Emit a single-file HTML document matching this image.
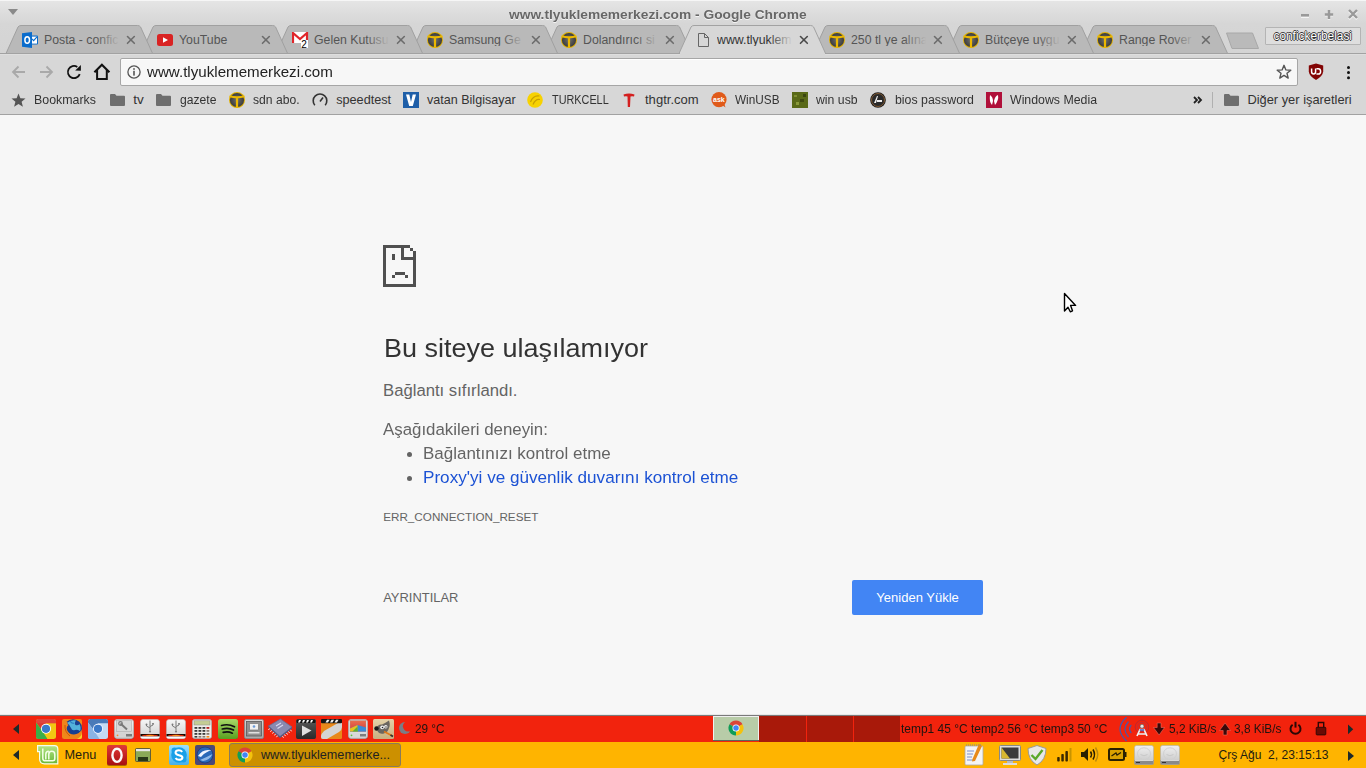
<!DOCTYPE html><html><head><meta charset="utf-8"><style>html,body{margin:0;padding:0;width:1366px;height:768px;overflow:hidden;position:relative;background:#f7f7f7;font-family:"Liberation Sans",sans-serif;}</style></head><body><div style="position:absolute;left:0px;top:0px;width:1366px;height:54px;background:linear-gradient(#e5e5e5 1px,#dcdcdc 14px,#d6d6d6 24px,#d4d4d4 53px);"></div>
<div style="position:absolute;left:0px;top:0px;width:1366px;height:1px;background:#f6f6f6;"></div>
<svg style="position:absolute;left:8px;top:9px" width="10" height="6" viewBox="0 0 10 6"><path d="M0 0 L10 0 L5 6 Z" fill="#8a8a8a"/></svg>
<div style="position:absolute;left:509px;top:8.01px;font-size:13.67px;line-height:13.67px;color:#676767;font-weight:bold;letter-spacing:0px;white-space:nowrap;transform:scaleX(1.0073);transform-origin:0 0;text-shadow:0 1px 0 #f4f4f4;">www.tlyuklememerkezi.com - Google Chrome</div>
<svg style="position:absolute;left:1300px;top:8px" width="60" height="12" viewBox="0 0 60 12"><rect x="1" y="7" width="8" height="3" fill="#f4f4f4"/><rect x="1" y="6" width="8" height="2.6" fill="#999"/><path d="M29 2 L29 11 M24.8 6.5 L33.2 6.5" stroke="#f4f4f4" stroke-width="2.6" transform="translate(0,0.8)"/><path d="M29 2 L29 11 M24.8 6.5 L33.2 6.5" stroke="#999" stroke-width="2.5"/><path d="M49 2.3 L57 10.3 M57 2.3 L49 10.3" stroke="#f4f4f4" stroke-width="2.4" transform="translate(0,0.8)"/><path d="M49 2 L57 10 M57 2 L49 10" stroke="#999" stroke-width="2.4"/></svg>
<svg style="position:absolute;left:0px;top:0px" width="1366" height="56" viewBox="0 0 1366 56"><path d="M1081.0 53.5 L1093 27 Q1094 25.5 1096 25.5 L1212.6 25.5 Q1214.6 25.5 1215.6 27 L1227.6 53.5" fill="#b9b9b9" stroke="#a0a0a0" stroke-width="1"/><path d="M947.0 53.5 L959 27 Q960 25.5 962 25.5 L1078.6 25.5 Q1080.6 25.5 1081.6 27 L1093.6 53.5" fill="#b9b9b9" stroke="#a0a0a0" stroke-width="1"/><path d="M813.0 53.5 L825 27 Q826 25.5 828 25.5 L944.6 25.5 Q946.6 25.5 947.6 27 L959.6 53.5" fill="#b9b9b9" stroke="#a0a0a0" stroke-width="1"/><path d="M545.0 53.5 L557 27 Q558 25.5 560 25.5 L676.6 25.5 Q678.6 25.5 679.6 27 L691.6 53.5" fill="#b9b9b9" stroke="#a0a0a0" stroke-width="1"/><path d="M411.0 53.5 L423 27 Q424 25.5 426 25.5 L542.6 25.5 Q544.6 25.5 545.6 27 L557.6 53.5" fill="#b9b9b9" stroke="#a0a0a0" stroke-width="1"/><path d="M276.0 53.5 L288 27 Q289 25.5 291 25.5 L407.6 25.5 Q409.6 25.5 410.6 27 L422.6 53.5" fill="#b9b9b9" stroke="#a0a0a0" stroke-width="1"/><path d="M141.0 53.5 L153 27 Q154 25.5 156 25.5 L272.6 25.5 Q274.6 25.5 275.6 27 L287.6 53.5" fill="#b9b9b9" stroke="#a0a0a0" stroke-width="1"/><path d="M6.0 53.5 L18 27 Q19 25.5 21 25.5 L137.6 25.5 Q139.6 25.5 140.6 27 L152.6 53.5" fill="#b9b9b9" stroke="#a0a0a0" stroke-width="1"/><path d="M678.57 54.5 L691 27 Q692 25.5 694 25.5 L810.6 25.5 Q812.6 25.5 813.6 27 L826.03 54.5" fill="#d7d7d7" stroke="#a2a2a2" stroke-width="1"/><path d="M1226.5 33 L1252.5 33 L1258.5 48.5 L1232 48.5 Z" fill="#bababa" stroke="#a8a8a8" stroke-width="1" stroke-linejoin="round"/></svg>
<div style="position:absolute;left:0px;top:53px;width:680px;height:1px;background:#a2a2a2;"></div>
<div style="position:absolute;left:825px;top:53px;width:541px;height:1px;background:#a2a2a2;"></div>
<svg style="position:absolute;left:22px;top:32px" width="16" height="16" viewBox="0 0 16 16"><path d="M10 3.5 L15 3.5 Q16 3.5 16 4.5 L16 11.5 Q16 12.5 15 12.5 L10 12.5 Z" fill="#0a6ccc"/><rect x="10" y="4.6" width="5" height="7" fill="#fff"/><path d="M10 6.8 L11.6 8.6 L15 4.8" stroke="#0a6ccc" stroke-width="1.1" fill="none"/><path d="M0 1.3 L10 0 L10 16 L0 14.7 Z" fill="#0a6ccc"/><ellipse cx="5.2" cy="8" rx="2.3" ry="3.3" fill="none" stroke="#fff" stroke-width="1.5"/></svg>
<svg style="position:absolute;left:157px;top:34px" width="16" height="12" viewBox="0 0 16 12"><rect x="0" y="0" width="16" height="12" rx="2.5" fill="#d92323"/><path d="M6 3.2 L11 6 L6 8.8 Z" fill="#fff"/></svg>
<svg style="position:absolute;left:292px;top:32px" width="17" height="17" viewBox="0 0 17 17"><rect x="0" y="0" width="16" height="11" fill="#fff"/><path d="M1 11 L1 1 L8 7 L15 1 L15 11" stroke="#e0252a" stroke-width="2.2" fill="none"/><rect x="9" y="8" width="7" height="8" fill="#fff"/><text x="9.3" y="15.5" font-family="Liberation Sans" font-size="10" fill="#000">2</text></svg>
<svg style="position:absolute;left:427px;top:32px" width="16" height="16" viewBox="0 0 16 16"><defs><radialGradient id="yfg"><stop offset="0" stop-color="#6e6e6e"/><stop offset="1" stop-color="#3c3c3c"/></radialGradient></defs><circle cx="8" cy="8" r="8" fill="#e0b000"/><circle cx="8" cy="8" r="7.1" fill="url(#yfg)"/><path d="M0.5 4.3 Q8 6.3 15.5 4.3 M8 5.3 L8 15.5" stroke="#ecb800" stroke-width="2.2" fill="none"/></svg>
<svg style="position:absolute;left:561px;top:32px" width="16" height="16" viewBox="0 0 16 16"><defs><radialGradient id="yfg"><stop offset="0" stop-color="#6e6e6e"/><stop offset="1" stop-color="#3c3c3c"/></radialGradient></defs><circle cx="8" cy="8" r="8" fill="#e0b000"/><circle cx="8" cy="8" r="7.1" fill="url(#yfg)"/><path d="M0.5 4.3 Q8 6.3 15.5 4.3 M8 5.3 L8 15.5" stroke="#ecb800" stroke-width="2.2" fill="none"/></svg>
<svg style="position:absolute;left:829px;top:32px" width="16" height="16" viewBox="0 0 16 16"><defs><radialGradient id="yfg"><stop offset="0" stop-color="#6e6e6e"/><stop offset="1" stop-color="#3c3c3c"/></radialGradient></defs><circle cx="8" cy="8" r="8" fill="#e0b000"/><circle cx="8" cy="8" r="7.1" fill="url(#yfg)"/><path d="M0.5 4.3 Q8 6.3 15.5 4.3 M8 5.3 L8 15.5" stroke="#ecb800" stroke-width="2.2" fill="none"/></svg>
<svg style="position:absolute;left:963px;top:32px" width="16" height="16" viewBox="0 0 16 16"><defs><radialGradient id="yfg"><stop offset="0" stop-color="#6e6e6e"/><stop offset="1" stop-color="#3c3c3c"/></radialGradient></defs><circle cx="8" cy="8" r="8" fill="#e0b000"/><circle cx="8" cy="8" r="7.1" fill="url(#yfg)"/><path d="M0.5 4.3 Q8 6.3 15.5 4.3 M8 5.3 L8 15.5" stroke="#ecb800" stroke-width="2.2" fill="none"/></svg>
<svg style="position:absolute;left:1097px;top:32px" width="16" height="16" viewBox="0 0 16 16"><defs><radialGradient id="yfg"><stop offset="0" stop-color="#6e6e6e"/><stop offset="1" stop-color="#3c3c3c"/></radialGradient></defs><circle cx="8" cy="8" r="8" fill="#e0b000"/><circle cx="8" cy="8" r="7.1" fill="url(#yfg)"/><path d="M0.5 4.3 Q8 6.3 15.5 4.3 M8 5.3 L8 15.5" stroke="#ecb800" stroke-width="2.2" fill="none"/></svg>
<svg style="position:absolute;left:698px;top:33px" width="11" height="14" viewBox="0 0 11 14"><path d="M0.5 0.5 L6.5 0.5 L10.5 4.5 L10.5 13.5 L0.5 13.5 Z M6.5 0.5 L6.5 4.5 L10.5 4.5" fill="none" stroke="#666" stroke-width="1"/></svg>
<div style="position:absolute;left:44px;top:33.99px;width:77.6px;overflow:hidden;font-size:12.3px;line-height:12.3px;color:#555;white-space:nowrap;">Posta - confic<div style="position:absolute;right:0;top:0;width:26px;height:16px;background:linear-gradient(90deg,rgba(0,0,0,0),#b9b9b9 90%)"></div></div>
<svg style="position:absolute;left:125.6px;top:35px" width="10" height="10" viewBox="0 0 10 10"><path d="M1.5 1.5 L8.3 8.3 M8.3 1.5 L1.5 8.3" stroke="#6c6c6c" stroke-width="1.6" stroke-linecap="round"/></svg>
<div style="position:absolute;left:179px;top:33.99px;width:77.6px;overflow:hidden;font-size:12.3px;line-height:12.3px;color:#555;white-space:nowrap;">YouTube<div style="position:absolute;right:0;top:0;width:26px;height:16px;background:linear-gradient(90deg,rgba(0,0,0,0),#b9b9b9 90%)"></div></div>
<svg style="position:absolute;left:260.6px;top:35px" width="10" height="10" viewBox="0 0 10 10"><path d="M1.5 1.5 L8.3 8.3 M8.3 1.5 L1.5 8.3" stroke="#6c6c6c" stroke-width="1.6" stroke-linecap="round"/></svg>
<div style="position:absolute;left:314px;top:33.99px;width:77.6px;overflow:hidden;font-size:12.3px;line-height:12.3px;color:#555;white-space:nowrap;">Gelen Kutusu<div style="position:absolute;right:0;top:0;width:26px;height:16px;background:linear-gradient(90deg,rgba(0,0,0,0),#b9b9b9 90%)"></div></div>
<svg style="position:absolute;left:395.6px;top:35px" width="10" height="10" viewBox="0 0 10 10"><path d="M1.5 1.5 L8.3 8.3 M8.3 1.5 L1.5 8.3" stroke="#6c6c6c" stroke-width="1.6" stroke-linecap="round"/></svg>
<div style="position:absolute;left:449px;top:33.99px;width:77.6px;overflow:hidden;font-size:12.3px;line-height:12.3px;color:#555;white-space:nowrap;">Samsung Ge<div style="position:absolute;right:0;top:0;width:26px;height:16px;background:linear-gradient(90deg,rgba(0,0,0,0),#b9b9b9 90%)"></div></div>
<svg style="position:absolute;left:530.6px;top:35px" width="10" height="10" viewBox="0 0 10 10"><path d="M1.5 1.5 L8.3 8.3 M8.3 1.5 L1.5 8.3" stroke="#6c6c6c" stroke-width="1.6" stroke-linecap="round"/></svg>
<div style="position:absolute;left:583px;top:33.99px;width:77.6px;overflow:hidden;font-size:12.3px;line-height:12.3px;color:#555;white-space:nowrap;">Dolandırıcı si<div style="position:absolute;right:0;top:0;width:26px;height:16px;background:linear-gradient(90deg,rgba(0,0,0,0),#b9b9b9 90%)"></div></div>
<svg style="position:absolute;left:664.6px;top:35px" width="10" height="10" viewBox="0 0 10 10"><path d="M1.5 1.5 L8.3 8.3 M8.3 1.5 L1.5 8.3" stroke="#6c6c6c" stroke-width="1.6" stroke-linecap="round"/></svg>
<div style="position:absolute;left:717px;top:33.99px;width:77.6px;overflow:hidden;font-size:12.3px;line-height:12.3px;color:#333;white-space:nowrap;">www.tlyuklem<div style="position:absolute;right:0;top:0;width:26px;height:16px;background:linear-gradient(90deg,rgba(0,0,0,0),#d7d7d7 90%)"></div></div>
<svg style="position:absolute;left:798.6px;top:35px" width="10" height="10" viewBox="0 0 10 10"><path d="M1.5 1.5 L8.3 8.3 M8.3 1.5 L1.5 8.3" stroke="#4a4a4a" stroke-width="1.6" stroke-linecap="round"/></svg>
<div style="position:absolute;left:851px;top:33.99px;width:77.6px;overflow:hidden;font-size:12.3px;line-height:12.3px;color:#555;white-space:nowrap;">250 tl ye alına<div style="position:absolute;right:0;top:0;width:26px;height:16px;background:linear-gradient(90deg,rgba(0,0,0,0),#b9b9b9 90%)"></div></div>
<svg style="position:absolute;left:932.6px;top:35px" width="10" height="10" viewBox="0 0 10 10"><path d="M1.5 1.5 L8.3 8.3 M8.3 1.5 L1.5 8.3" stroke="#6c6c6c" stroke-width="1.6" stroke-linecap="round"/></svg>
<div style="position:absolute;left:985px;top:33.99px;width:77.6px;overflow:hidden;font-size:12.3px;line-height:12.3px;color:#555;white-space:nowrap;">Bütçeye uygu<div style="position:absolute;right:0;top:0;width:26px;height:16px;background:linear-gradient(90deg,rgba(0,0,0,0),#b9b9b9 90%)"></div></div>
<svg style="position:absolute;left:1066.6px;top:35px" width="10" height="10" viewBox="0 0 10 10"><path d="M1.5 1.5 L8.3 8.3 M8.3 1.5 L1.5 8.3" stroke="#6c6c6c" stroke-width="1.6" stroke-linecap="round"/></svg>
<div style="position:absolute;left:1119px;top:33.99px;width:77.6px;overflow:hidden;font-size:12.3px;line-height:12.3px;color:#555;white-space:nowrap;">Range Rover<div style="position:absolute;right:0;top:0;width:26px;height:16px;background:linear-gradient(90deg,rgba(0,0,0,0),#b9b9b9 90%)"></div></div>
<svg style="position:absolute;left:1200.6px;top:35px" width="10" height="10" viewBox="0 0 10 10"><path d="M1.5 1.5 L8.3 8.3 M8.3 1.5 L1.5 8.3" stroke="#6c6c6c" stroke-width="1.6" stroke-linecap="round"/></svg>
<div style="position:absolute;left:1265px;top:27px;width:94px;height:16px;border:1px solid #b4b4b4;background:#dedede;border-radius:1px"></div>
<div style="position:absolute;left:1273.5px;top:31.01px;font-size:11.87px;line-height:11.87px;color:#fff;font-weight:normal;letter-spacing:0px;white-space:nowrap;text-shadow:0.8px 0 0 #333,-0.8px 0 0 #333,0 0.8px 0 #333,0 -0.8px 0 #333;">confickerbelasi</div>
<div style="position:absolute;left:0px;top:54px;width:1366px;height:60px;background:#d7d7d7;"></div>
<div style="position:absolute;left:0px;top:54px;width:680px;height:1px;background:#dedede;"></div>
<div style="position:absolute;left:825px;top:54px;width:541px;height:1px;background:#dedede;"></div>
<div style="position:absolute;left:0px;top:114px;width:1366px;height:1px;background:#a2a2a2;"></div>
<svg style="position:absolute;left:11px;top:65px" width="15" height="14" viewBox="0 0 15 14"><path d="M14 7 L2 7 M7.5 1.5 L2 7 L7.5 12.5" stroke="#a9a9a9" stroke-width="1.8" fill="none"/></svg>
<svg style="position:absolute;left:39px;top:65px" width="15" height="14" viewBox="0 0 15 14"><path d="M1 7 L13 7 M7.5 1.5 L13 7 L7.5 12.5" stroke="#a9a9a9" stroke-width="1.8" fill="none"/></svg>
<svg style="position:absolute;left:66px;top:64px" width="16" height="16" viewBox="0 0 16 16"><path d="M13.73 10.09 A6.1 6.1 0 1 1 11.3 2.9" stroke="#111" stroke-width="1.8" fill="none"/><path d="M9.2 6.6 L14.9 1 L14.9 6.7 Z" fill="#111"/></svg>
<svg style="position:absolute;left:93px;top:63px" width="18" height="17" viewBox="0 0 18 17"><path d="M1.4 9.3 L8.9 1.8 L16.4 9.3" stroke="#111" stroke-width="2.1" fill="none" stroke-linejoin="miter"/><path d="M4.1 7 L4.1 15.9 L13.8 15.9 L13.8 7" stroke="#111" stroke-width="2" fill="none"/></svg>
<div style="position:absolute;left:120px;top:58px;width:1176px;height:26px;border:1px solid #a6a6a6;border-radius:2px;background:#f7f7f7;box-shadow:inset 0 1px 0 #fff"></div>
<svg style="position:absolute;left:127px;top:65px" width="14" height="14" viewBox="0 0 14 14"><circle cx="7" cy="7" r="6.1" stroke="#555" stroke-width="1.3" fill="none"/><rect x="6.2" y="3.2" width="1.6" height="1.6" fill="#555"/><rect x="6.2" y="5.8" width="1.6" height="4.8" fill="#555"/></svg>
<div style="position:absolute;left:147px;top:65.00px;font-size:14.84px;line-height:14.84px;color:#222;font-weight:normal;letter-spacing:0px;white-space:nowrap;transform:scaleX(1.0206);transform-origin:0 0;">www.tlyuklememerkezi.com</div>
<svg style="position:absolute;left:1276px;top:64px" width="16" height="16" viewBox="0 0 16 16"><path d="M8 1.3 L9.9 5.9 L14.8 6.2 L11 9.3 L12.2 14.1 L8 11.4 L3.8 14.1 L5 9.3 L1.2 6.2 L6.1 5.9 Z" stroke="#555" stroke-width="1.4" fill="none" stroke-linejoin="round"/></svg>
<svg style="position:absolute;left:1308px;top:63px" width="16" height="18" viewBox="0 0 16 18"><path d="M8 0.6 L15.2 2.6 L15.2 8.5 Q14.6 13.5 8 16.9 Q1.4 13.5 0.8 8.5 L0.8 2.6 Z" fill="#820404"/><path d="M3.6 5.6 L3.6 8.8 Q3.6 11 5.6 11 Q7.6 11 7.6 8.8 L7.6 5.6" stroke="#fff" stroke-width="1.5" fill="none"/><path d="M8.4 5.8 L10.2 5.8 Q12.6 5.8 12.6 8.4 Q12.6 11 10.2 11 L8.4 11" stroke="#fff" stroke-width="1.5" fill="none"/></svg>
<svg style="position:absolute;left:1346px;top:65px" width="5" height="15" viewBox="0 0 5 15"><circle cx="2.5" cy="2.5" r="1.5" fill="#111"/><circle cx="2.5" cy="7.6" r="1.5" fill="#111"/><circle cx="2.5" cy="12.7" r="1.5" fill="#111"/></svg>
<svg style="position:absolute;left:11px;top:93px" width="15" height="14" viewBox="0 0 15 14"><path d="M7.5 0.5 L9.4 5.2 L14.5 5.5 L10.6 8.7 L11.9 13.7 L7.5 10.9 L3.1 13.7 L4.4 8.7 L0.5 5.5 L5.6 5.2 Z" fill="#555"/></svg>
<div style="position:absolute;left:34.4px;top:94.01px;font-size:12.5px;line-height:12.5px;color:#333;font-weight:normal;letter-spacing:0px;white-space:nowrap;transform:scaleX(0.9915);transform-origin:0 0;">Bookmarks</div>
<div style="position:absolute;left:133.3px;top:93.01px;font-size:13.5px;line-height:13.5px;color:#333;font-weight:normal;letter-spacing:0px;white-space:nowrap;">tv</div>
<div style="position:absolute;left:179.6px;top:94.01px;font-size:12.5px;line-height:12.5px;color:#333;font-weight:normal;letter-spacing:0px;white-space:nowrap;transform:scaleX(0.9724);transform-origin:0 0;">gazete</div>
<div style="position:absolute;left:253px;top:94.01px;font-size:12.5px;line-height:12.5px;color:#333;font-weight:normal;letter-spacing:0px;white-space:nowrap;transform:scaleX(0.9695);transform-origin:0 0;">sdn abo.</div>
<div style="position:absolute;left:336.2px;top:94.00px;font-size:12.68px;line-height:12.68px;color:#333;font-weight:normal;letter-spacing:0px;white-space:nowrap;">speedtest</div>
<div style="position:absolute;left:427.1px;top:94.01px;font-size:12.54px;line-height:12.54px;color:#333;font-weight:normal;letter-spacing:0px;white-space:nowrap;">vatan Bilgisayar</div>
<div style="position:absolute;left:551.8px;top:94.01px;font-size:12.5px;line-height:12.5px;color:#333;font-weight:normal;letter-spacing:0px;white-space:nowrap;transform:scaleX(0.8682);transform-origin:0 0;">TURKCELL</div>
<div style="position:absolute;left:645px;top:93.01px;font-size:13.06px;line-height:13.06px;color:#333;font-weight:normal;letter-spacing:0px;white-space:nowrap;">thgtr.com</div>
<div style="position:absolute;left:734.8px;top:94.01px;font-size:12.5px;line-height:12.5px;color:#333;font-weight:normal;letter-spacing:0px;white-space:nowrap;transform:scaleX(0.9421);transform-origin:0 0;">WinUSB</div>
<div style="position:absolute;left:816.2px;top:94.01px;font-size:12.5px;line-height:12.5px;color:#333;font-weight:normal;letter-spacing:0px;white-space:nowrap;transform:scaleX(0.9814);transform-origin:0 0;">win usb</div>
<div style="position:absolute;left:894.8px;top:94.01px;font-size:12.5px;line-height:12.5px;color:#333;font-weight:normal;letter-spacing:0px;white-space:nowrap;transform:scaleX(0.9886);transform-origin:0 0;">bios password</div>
<div style="position:absolute;left:1010px;top:94.01px;font-size:12.5px;line-height:12.5px;color:#333;font-weight:normal;letter-spacing:0px;white-space:nowrap;transform:scaleX(0.9859);transform-origin:0 0;">Windows Media</div>
<div style="position:absolute;left:1247.4px;top:94.00px;font-size:12.87px;line-height:12.87px;color:#333;font-weight:normal;letter-spacing:0px;white-space:nowrap;">Diğer yer işaretleri</div>
<svg style="position:absolute;left:110px;top:94px" width="15" height="12" viewBox="0 0 15 12"><path d="M0 1 Q0 0 1 0 L5 0 L6.5 1.8 L14 1.8 Q15 1.8 15 2.8 L15 11 Q15 12 14 12 L1 12 Q0 12 0 11 Z" fill="#6e6e6e"/></svg>
<svg style="position:absolute;left:156px;top:94px" width="15" height="12" viewBox="0 0 15 12"><path d="M0 1 Q0 0 1 0 L5 0 L6.5 1.8 L14 1.8 Q15 1.8 15 2.8 L15 11 Q15 12 14 12 L1 12 Q0 12 0 11 Z" fill="#6e6e6e"/></svg>
<svg style="position:absolute;left:1224px;top:94px" width="15" height="12" viewBox="0 0 15 12"><path d="M0 1 Q0 0 1 0 L5 0 L6.5 1.8 L14 1.8 Q15 1.8 15 2.8 L15 11 Q15 12 14 12 L1 12 Q0 12 0 11 Z" fill="#6e6e6e"/></svg>
<svg style="position:absolute;left:229px;top:92px" width="16" height="16" viewBox="0 0 16 16"><defs><radialGradient id="yfg"><stop offset="0" stop-color="#6e6e6e"/><stop offset="1" stop-color="#3c3c3c"/></radialGradient></defs><circle cx="8" cy="8" r="8" fill="#e0b000"/><circle cx="8" cy="8" r="7.1" fill="url(#yfg)"/><path d="M0.5 4.3 Q8 6.3 15.5 4.3 M8 5.3 L8 15.5" stroke="#ecb800" stroke-width="2.2" fill="none"/></svg>
<svg style="position:absolute;left:312px;top:92px" width="16" height="16" viewBox="0 0 16 16"><path d="M2.8 13.2 A6.8 6.8 0 1 1 13.2 13.2" stroke="#333" stroke-width="1.6" fill="none"/><path d="M8 9.5 L11 5.5" stroke="#333" stroke-width="1.6"/></svg>
<svg style="position:absolute;left:403px;top:92px" width="16" height="16" viewBox="0 0 16 16"><rect width="16" height="16" fill="#1f5fa8"/><path d="M3 2.5 L6.3 2.5 L8 10 L9.7 2.5 L13 2.5 L9.8 14 L6.2 14 Z" fill="#fff"/></svg>
<svg style="position:absolute;left:527px;top:92px" width="16" height="16" viewBox="0 0 16 16"><circle cx="8" cy="8" r="7.8" fill="#f7d200"/><path d="M3.5 10 Q6 3 12.5 4 M6 12.5 Q8.5 6.5 13 7.5" stroke="#c8a000" stroke-width="1.2" fill="none"/></svg>
<svg style="position:absolute;left:623px;top:92px" width="12" height="16" viewBox="0 0 12 16"><path d="M0.5 2.5 Q6 0.5 11.5 2.5 L11 4.5 Q9 4 7.5 4.5 L7 15 L4.8 15 L4.5 4.5 Q3 4 1 4.5 Z" fill="#d42020"/></svg>
<svg style="position:absolute;left:711px;top:92px" width="16" height="16" viewBox="0 0 16 16"><circle cx="8" cy="7.6" r="7.6" fill="#e05a1a"/><path d="M11 13 L14.5 15.5 L13 11" fill="#e05a1a"/><text x="2" y="10.3" font-family="Liberation Sans" font-size="7" font-weight="bold" fill="#fff">ask</text></svg>
<svg style="position:absolute;left:792px;top:92px" width="16" height="16" viewBox="0 0 16 16"><rect width="16" height="16" fill="#5a6a18"/><rect x="2" y="3" width="3" height="2" fill="#7f8f30"/><rect x="8" y="7" width="4" height="3" fill="#3f4a10"/><rect x="4" y="10" width="3" height="3" fill="#8a9a3a"/><rect x="11" y="2" width="3" height="3" fill="#3a4510"/></svg>
<svg style="position:absolute;left:870px;top:92px" width="16" height="16" viewBox="0 0 16 16"><circle cx="8" cy="8" r="7.8" fill="#1a1a1a"/><circle cx="8" cy="8" r="6.5" fill="#2a2a2a" stroke="#9a6a3a" stroke-width="0.8"/><path d="M4 11 L7 4 L8 4 L6 11 Z M7 8 L12 8 L12 10 L7 10Z" fill="#eee"/></svg>
<svg style="position:absolute;left:986px;top:92px" width="16" height="16" viewBox="0 0 16 16"><rect width="16" height="16" fill="#b0103a"/><path d="M4 3 Q7 5 7 9 L6 13 Q3 10 4 3 Z M8 9 Q9 4 12 3 Q13 8 9 13 Z" fill="#fff"/></svg>
<svg style="position:absolute;left:1193px;top:96px" width="10" height="8" viewBox="0 0 10 8"><path d="M1 1 L4 4 L1 7 M5 1 L8 4 L5 7" stroke="#222" stroke-width="1.8" fill="none"/></svg>
<div style="position:absolute;left:1212px;top:92px;width:1px;height:16px;background:#b0b0b0;"></div>
<div style="position:absolute;left:0px;top:115px;width:1366px;height:600px;background:#f7f7f7;"></div>
<svg style="position:absolute;left:383px;top:245px" width="33" height="42" viewBox="0 0 33 42" shape-rendering="crispEdges" fill="#505050"><rect x="0" y="0" width="27" height="3"/><rect x="27" y="3" width="3" height="3"/><rect x="30" y="6" width="3" height="36"/><rect x="0" y="0" width="3" height="42"/><rect x="0" y="39" width="33" height="3"/><rect x="18" y="3" width="3" height="12"/><rect x="18" y="12" width="12" height="3"/><rect x="9" y="9" width="3" height="6"/><rect x="12" y="27" width="10" height="3"/><rect x="9" y="30" width="3" height="3"/><rect x="22" y="30" width="3" height="3"/></svg>
<div style="position:absolute;left:384px;top:336.00px;font-size:25.44px;line-height:25.44px;color:#333;font-weight:normal;letter-spacing:0px;white-space:nowrap;transform:scaleX(1.0609);transform-origin:0 0;">Bu siteye ulaşılamıyor</div>
<div style="position:absolute;left:383px;top:383.01px;font-size:16.69px;line-height:16.69px;color:#646464;font-weight:normal;letter-spacing:0px;white-space:nowrap;">Bağlantı sıfırlandı.</div>
<div style="position:absolute;left:383px;top:421.01px;font-size:16.43px;line-height:16.43px;color:#646464;font-weight:normal;letter-spacing:0px;white-space:nowrap;transform:scaleX(1.0265);transform-origin:0 0;">Aşağıdakileri deneyin:</div>
<div style="position:absolute;left:407px;top:451.5px;width:5px;height:5px;border-radius:50%;background:#646464"></div>
<div style="position:absolute;left:407px;top:475.5px;width:5px;height:5px;border-radius:50%;background:#646464"></div>
<div style="position:absolute;left:423px;top:445.01px;font-size:16.43px;line-height:16.43px;color:#646464;font-weight:normal;letter-spacing:0px;white-space:nowrap;transform:scaleX(1.0333);transform-origin:0 0;">Bağlantınızı kontrol etme</div>
<div style="position:absolute;left:423px;top:469.01px;font-size:16.43px;line-height:16.43px;color:#1c52d4;font-weight:normal;letter-spacing:0px;white-space:nowrap;transform:scaleX(1.0424);transform-origin:0 0;">Proxy'yi ve güvenlik duvarını kontrol etme</div>
<div style="position:absolute;left:383.2px;top:511.01px;font-size:11.69px;line-height:11.69px;color:#646464;font-weight:normal;letter-spacing:0px;white-space:nowrap;">ERR_CONNECTION_RESET</div>
<div style="position:absolute;left:383.2px;top:592.01px;font-size:12.95px;line-height:12.95px;color:#646464;font-weight:normal;letter-spacing:0px;white-space:nowrap;">AYRINTILAR</div>
<div style="position:absolute;left:852px;top:580px;width:131px;height:35px;border-radius:2px;background:#4285f4"></div>
<div style="position:absolute;left:876.3px;top:591.00px;font-size:13.03px;line-height:13.03px;color:#fff;font-weight:normal;letter-spacing:0px;white-space:nowrap;">Yeniden Yükle</div>
<svg style="position:absolute;left:1063px;top:292px" width="15" height="22" viewBox="0 0 15 22"><path d="M1.5 1.5 L1.5 19 L5 15.3 L7.3 19.8 L9.5 18.8 L7.6 13.4 L12.6 13.4 Z" fill="#fff" stroke="#000" stroke-width="1.4" stroke-linejoin="round"/></svg>
<div style="position:absolute;left:0px;top:714px;width:1366px;height:1px;background:#e8e8e8;"></div>
<div style="position:absolute;left:0px;top:715px;width:1366px;height:1px;background:#7a7a7a;"></div>
<div style="position:absolute;left:0px;top:716px;width:1366px;height:26px;background:#f2230d;"></div>
<div style="position:absolute;left:0px;top:742px;width:1366px;height:26px;background:#ffb400;"></div>
<svg style="position:absolute;left:13px;top:724px" width="6" height="10" viewBox="0 0 6 10"><path d="M6 0 L0 5 L6 10 Z" fill="#1e2a2a"/></svg>
<svg style="position:absolute;left:13px;top:750px" width="6" height="10" viewBox="0 0 6 10"><path d="M6 0 L0 5 L6 10 Z" fill="#1e2a2a"/></svg>
<svg style="position:absolute;left:36px;top:719px" width="20" height="20" viewBox="0 0 20 20"><rect x="0.5" y="1.2" width="19" height="19" rx="2.5" fill="#5a0a00" opacity="0.55"/><clipPath id="cr1"><rect width="20" height="20" rx="2.5"/></clipPath><g clip-path="url(#cr1)"><rect width="20" height="20" fill="#f2c812"/><path d="M0 0 L20 0 L20 4.3 L10 4.3 L5.3 10.5 L0 3.5 Z" fill="#dd3a30"/><path d="M0 3.5 L5.3 10.5 L11.5 20 L0 20 Z" fill="#3aae48"/><path d="M12.5 14 L11.5 20 L14 20Z" fill="#f2c812"/><rect width="20" height="4.3" fill="#e85a50" opacity="0.35"/></g><circle cx="10" cy="9.8" r="5" fill="#fff"/><circle cx="10" cy="9.8" r="4.1" fill="#3a7ac8"/></svg>
<svg style="position:absolute;left:62px;top:719px" width="20" height="20" viewBox="0 0 20 20"><rect x="0.5" y="1.2" width="19" height="19" rx="2.5" fill="#5a0a00" opacity="0.55"/><rect width="20" height="20" rx="2" fill="#f08818"/><circle cx="11" cy="9.2" r="9" fill="#1a3f92"/><path d="M5 4 Q9 0.5 14 1.5 Q12 4 13.5 6 Q16 7 17.5 5 Q19.5 9 18 12 Q15 10 13 11 Q10 12 9 9 Q8 6 5 4 Z" fill="#52b0dc"/><path d="M8 2 Q10 5 12 4" stroke="#2a78c0" stroke-width="1.2" fill="none"/><path d="M1 3 Q3 1.5 5.5 3 Q5 5 6.5 6 Q4 8 5 11 Q7 15.5 12 15.5 Q17 15 19.5 11 Q20 16 17 18.5 Q13 20.5 8 19.5 Q2 17.5 0.6 11 Q0.3 6 1 3 Z" fill="#f0841a"/><path d="M3 6 Q2.5 13 8 17" stroke="#c85808" stroke-width="1" fill="none"/><path d="M15 19.8 Q19.5 18 20 13.5 L20 18 Q20 20 18 20 Z" fill="#f8d428"/></svg>
<svg style="position:absolute;left:88px;top:719px" width="20" height="20" viewBox="0 0 20 20"><rect x="0.5" y="1.2" width="19" height="19" rx="2.5" fill="#5a0a00" opacity="0.55"/><clipPath id="cr2"><rect width="20" height="20" rx="2.5"/></clipPath><g clip-path="url(#cr2)"><rect width="20" height="20" fill="#c4daf2"/><path d="M0 0 L20 0 L20 4.3 L10 4.3 L5.3 10.5 L0 3.5 Z" fill="#4a7ab8"/><path d="M0 3.5 L5.3 10.5 L11.5 20 L0 20 Z" fill="#8ab4e4"/></g><circle cx="10" cy="9.8" r="5" fill="#f0f4ff"/><circle cx="10" cy="9.8" r="4.1" fill="#3a78c8"/></svg>
<svg style="position:absolute;left:114px;top:719px" width="20" height="20" viewBox="0 0 20 20"><rect x="0.5" y="1.2" width="19" height="19" rx="2.5" fill="#5a0a00" opacity="0.55"/><defs><linearGradient id="g114" x1="0" y1="0" x2="0" y2="1"><stop offset="0" stop-color="#f4f4f4"/><stop offset="1" stop-color="#c8c8c8"/></linearGradient></defs><rect x="0.5" y="0.5" width="19" height="19" rx="2.5" fill="url(#g114)" stroke="#b8b8b8" stroke-width="0.8"/><rect x="2.5" y="1.5" width="15" height="11" fill="#d8d8d8" stroke="#aaa" stroke-width="0.6"/><path d="M6.5 4.5 L13 10.5" stroke="#777" stroke-width="2"/><circle cx="6.5" cy="4.5" r="1.8" fill="none" stroke="#777" stroke-width="1.2"/><rect x="2" y="14.5" width="16" height="3.5" fill="#d4d4d4"/><circle cx="3.5" cy="16.3" r="0.9" fill="#f08a30"/><rect x="12.5" y="15" width="1" height="2.5" fill="#222"/><rect x="14.5" y="15" width="1" height="2.5" fill="#222"/><rect x="16.5" y="15" width="1" height="2.5" fill="#222"/></svg>
<svg style="position:absolute;left:140px;top:719px" width="20" height="20" viewBox="0 0 20 20"><rect x="0.5" y="1.2" width="19" height="19" rx="2.5" fill="#5a0a00" opacity="0.55"/><defs><linearGradient id="gu140" x1="0" y1="0" x2="0" y2="1"><stop offset="0" stop-color="#f6f6f6"/><stop offset="1" stop-color="#cfcfcf"/></linearGradient></defs><rect x="0.5" y="0.5" width="19" height="19" rx="2.5" fill="url(#gu140)" stroke="#c0c0c0" stroke-width="0.6"/><path d="M0.5 15 L19.5 15 L19.5 17.6 L0.5 17.6 Z" fill="#1a0800"/><ellipse cx="10" cy="16.6" rx="8" ry="1" fill="#e83010"/><ellipse cx="10" cy="16.5" rx="4" ry="0.6" fill="#f8a020"/><path d="M0.5 17.6 L19.5 17.6 L19.5 18 Q19.5 19.5 18 19.5 L2 19.5 Q0.5 19.5 0.5 18 Z" fill="#fafafa"/><path d="M10 1.5 L10 12.5 M10 9 L6.5 7 L6.5 5.5 M10 7.5 L13 6 L13 4.5" stroke="#7a7a7a" stroke-width="1" fill="none"/><path d="M8.8 12 L10 14 L11.2 12 Z" fill="#7a7a7a"/><circle cx="6.5" cy="5.5" r="1" fill="#7a7a7a"/><rect x="12.2" y="4" width="1.6" height="1.4" fill="#7a7a7a"/></svg>
<svg style="position:absolute;left:166px;top:719px" width="20" height="20" viewBox="0 0 20 20"><rect x="0.5" y="1.2" width="19" height="19" rx="2.5" fill="#5a0a00" opacity="0.55"/><defs><linearGradient id="gu166" x1="0" y1="0" x2="0" y2="1"><stop offset="0" stop-color="#f6f6f6"/><stop offset="1" stop-color="#cfcfcf"/></linearGradient></defs><rect x="0.5" y="0.5" width="19" height="19" rx="2.5" fill="url(#gu166)" stroke="#c0c0c0" stroke-width="0.6"/><path d="M0.5 15 L19.5 15 L19.5 17.6 L0.5 17.6 Z" fill="#1a0800"/><ellipse cx="10" cy="16.6" rx="8" ry="1" fill="#e83010"/><ellipse cx="10" cy="16.5" rx="4" ry="0.6" fill="#f8a020"/><path d="M0.5 17.6 L19.5 17.6 L19.5 18 Q19.5 19.5 18 19.5 L2 19.5 Q0.5 19.5 0.5 18 Z" fill="#fafafa"/><path d="M10 1.5 L10 12.5 M10 9 L6.5 7 L6.5 5.5 M10 7.5 L13 6 L13 4.5" stroke="#7a7a7a" stroke-width="1" fill="none"/><path d="M8.8 12 L10 14 L11.2 12 Z" fill="#7a7a7a"/><circle cx="6.5" cy="5.5" r="1" fill="#7a7a7a"/><rect x="12.2" y="4" width="1.6" height="1.4" fill="#7a7a7a"/></svg>
<svg style="position:absolute;left:192px;top:719px" width="20" height="20" viewBox="0 0 20 20"><rect x="0.5" y="1.2" width="19" height="19" rx="2.5" fill="#5a0a00" opacity="0.55"/><rect x="0.5" y="0.5" width="19" height="19" rx="2" fill="#f0eeea" stroke="#b0b0b0" stroke-width="0.8"/><rect x="2" y="1.8" width="16" height="4.2" fill="#c4cc94" stroke="#888" stroke-width="0.5"/><g fill="#3a3a3a"><rect x="2.5" y="8" width="2.8" height="1.8"/><rect x="6.5" y="8" width="2.8" height="1.8"/><rect x="10.5" y="8" width="2.8" height="1.8"/><rect x="2.5" y="11" width="2.8" height="1.8"/><rect x="6.5" y="11" width="2.8" height="1.8"/><rect x="10.5" y="11" width="2.8" height="1.8"/><rect x="2.5" y="14" width="2.8" height="1.8"/><rect x="6.5" y="14" width="2.8" height="1.8"/><rect x="10.5" y="14" width="2.8" height="1.8"/><rect x="2.5" y="17" width="2.8" height="1.6"/></g><g fill="#8a7a70"><rect x="6.5" y="17" width="2.8" height="1.6"/><rect x="10.5" y="17" width="2.8" height="1.6"/><rect x="14.5" y="11" width="2.8" height="1.8"/><rect x="14.5" y="14" width="2.8" height="1.8"/></g><rect x="14.5" y="8" width="2.8" height="1.8" fill="#b82020"/><rect x="14.5" y="17" width="2.8" height="1.6" fill="#f08a18"/></svg>
<svg style="position:absolute;left:218px;top:719px" width="20" height="20" viewBox="0 0 20 20"><rect x="0.5" y="1.2" width="19" height="19" rx="2.5" fill="#5a0a00" opacity="0.55"/><defs><linearGradient id="gsp" x1="0" y1="0" x2="0" y2="1"><stop offset="0" stop-color="#a8d868"/><stop offset="1" stop-color="#58a020"/></linearGradient></defs><rect width="20" height="20" rx="2.5" fill="url(#gsp)"/><path d="M3.5 6.5 Q10.5 4.5 16.5 7.8 M4.3 10 Q10.5 8.3 15.5 11 M5.2 13.3 Q10.5 12 14.3 14.2" stroke="#111" stroke-width="1.7" fill="none" stroke-linecap="round"/></svg>
<svg style="position:absolute;left:244px;top:719px" width="20" height="20" viewBox="0 0 20 20"><rect x="0.5" y="1.2" width="19" height="19" rx="2.5" fill="#5a0a00" opacity="0.55"/><defs><linearGradient id="gsc" x1="0" y1="0" x2="0" y2="1"><stop offset="0" stop-color="#d8d8d8"/><stop offset="1" stop-color="#a8a8a8"/></linearGradient></defs><rect x="0.5" y="0.5" width="19" height="19" rx="1.5" fill="url(#gsc)" stroke="#8a8a8a" stroke-width="0.8"/><rect x="2.5" y="2.5" width="15" height="14.5" fill="#909090" stroke="#5a5a5a" stroke-width="0.8"/><rect x="5.5" y="4.5" width="9" height="6.5" rx="0.8" fill="#f0f0f0" stroke="#666" stroke-width="0.6"/><circle cx="10" cy="7.5" r="1.3" fill="#6a9ad8"/><rect x="4.5" y="13" width="11" height="1.5" fill="#e0e0e0"/></svg>
<svg style="position:absolute;left:267px;top:717px" width="26" height="23" viewBox="0 0 26 23"><path d="M1.5 9 L13.5 2 L25 10 L13 19.5 Z" fill="#5a5a78" transform="translate(0,1.2)"/><path d="M1.5 9 L13.5 2 L25 10 L13 19.5 Z" fill="#8a8ab0" stroke="#6a6a90" stroke-width="0.8"/><path d="M1.5 9 L13 19.5 L13 21 L1.5 10.5 Z M13 19.5 L25 10 L25 11.5 L13 21 Z" fill="#5a5a80"/><g stroke="#f0f0f0" stroke-width="1"><path d="M2.5 11.5 L1.5 13 M4.5 13.3 L3.5 14.8 M6.5 15.1 L5.5 16.6 M8.5 16.9 L7.5 18.4 M10.5 18.7 L9.5 20.2 M15.5 19.2 L16.5 20.7 M17.5 17.6 L18.5 19.1 M19.5 16 L20.5 17.5 M21.5 14.4 L22.5 15.9 M23.5 12.8 L24.5 14.3"/></g><path d="M9 9 L14 6 M10.5 11.5 L16 8" stroke="#d8d8f0" stroke-width="1.2"/></svg>
<svg style="position:absolute;left:296px;top:719px" width="20" height="20" viewBox="0 0 20 20"><rect x="0.5" y="1.2" width="19" height="19" rx="2.5" fill="#5a0a00" opacity="0.55"/><defs><linearGradient id="gvd" x1="0" y1="0" x2="0" y2="1"><stop offset="0" stop-color="#5a5a5a"/><stop offset="1" stop-color="#2a2a2a"/></linearGradient></defs><rect width="20" height="20" rx="2" fill="url(#gvd)"/><rect x="0.5" y="0.5" width="19" height="3.5" rx="1" fill="#111"/><g fill="#f4f4f4"><path d="M3 1 L5 1 L4 3.5 L2 3.5Z"/><path d="M7 1 L9 1 L8 3.5 L6 3.5Z"/><path d="M11 1 L13 1 L12 3.5 L10 3.5Z"/><path d="M15 1 L17 1 L16 3.5 L14 3.5Z"/></g><path d="M6 6.5 L15.5 11.5 L6 17 Z" fill="#e0e0e0"/></svg>
<svg style="position:absolute;left:321px;top:719px" width="21" height="20" viewBox="0 0 21 20"><rect x="0.5" y="1.2" width="19" height="19" rx="2.5" fill="#5a0a00" opacity="0.55"/><rect width="21" height="20" rx="1.5" fill="#e8881a"/><path d="M0 17 Q0 15 3 12 L17 4 L21 4 L21 8 Q21 11 18 13 L6 20 L2 20 Q0 20 0 18 Z" fill="#d4d4d4"/><rect x="0" y="0" width="21" height="4.3" rx="1" fill="#151515"/><g fill="#f0f0f0"><path d="M6 0.7 L8.5 0.7 L7 3.6 L4.5 3.6Z"/><path d="M10.5 0.7 L13 0.7 L11.5 3.6 L9 3.6Z"/><path d="M15 0.7 L17.5 0.7 L16 3.6 L13.5 3.6Z"/></g></svg>
<svg style="position:absolute;left:348px;top:719px" width="20" height="20" viewBox="0 0 20 20"><rect x="0.5" y="1.2" width="19" height="19" rx="2.5" fill="#5a0a00" opacity="0.55"/><defs><linearGradient id="gpv" x1="0" y1="0" x2="0" y2="1"><stop offset="0" stop-color="#f4f4f4"/><stop offset="1" stop-color="#d0d0d0"/></linearGradient></defs><defs><linearGradient id="gps" x1="0" y1="0" x2="0" y2="1"><stop offset="0" stop-color="#e87050"/><stop offset="1" stop-color="#d83838"/></linearGradient></defs><rect x="0.5" y="0.5" width="19" height="19" rx="2.5" fill="url(#gpv)" stroke="#b0b0b0" stroke-width="0.8"/><rect x="2" y="1.5" width="16" height="11" fill="url(#gps)" stroke="#999" stroke-width="0.4"/><path d="M2 12.5 L2 9.5 L9.5 6 L18 8.5 L18 12.5 Z" fill="#3a8ad8"/><path d="M2 12.5 L2 9.5 L9.5 6 L9.5 12.5 Z" fill="#e8c020"/><path d="M4.5 12.5 L9.5 7.5 L9.8 12.5Z" fill="#58b038"/><rect x="2" y="14.5" width="16" height="3.5" fill="#d8d8d8"/><circle cx="3.5" cy="16.3" r="0.9" fill="#5ac040"/><rect x="12.5" y="15" width="1" height="2.5" fill="#222"/><rect x="14.5" y="15" width="1" height="2.5" fill="#222"/><rect x="16.5" y="15" width="1" height="2.5" fill="#222"/></svg>
<svg style="position:absolute;left:373px;top:719px" width="21" height="20" viewBox="0 0 21 20"><rect x="0.5" y="1.2" width="19" height="19" rx="2.5" fill="#5a0a00" opacity="0.55"/><defs><linearGradient id="ggm" x1="0" y1="0" x2="0" y2="1"><stop offset="0" stop-color="#e4d2a8"/><stop offset="1" stop-color="#c8b080"/></linearGradient></defs><rect width="21" height="20" rx="1.5" fill="url(#ggm)"/><path d="M3.5 9 Q5 5 9 5.5 L12 4 L16 1.5 Q17.5 6 16 9 Q15 13 11 14.5 Q7 15.5 5 13 Z" fill="#6a6660"/><circle cx="9.2" cy="8.3" r="1.9" fill="#f4f4f4"/><circle cx="12.8" cy="7.8" r="1.7" fill="#f4f4f4"/><circle cx="9.5" cy="8.5" r="0.8" fill="#222"/><circle cx="13" cy="8" r="0.7" fill="#222"/><circle cx="3.5" cy="9.5" r="2.2" fill="#1a1a1a"/><path d="M11 12.5 L19.5 17" stroke="#e07818" stroke-width="1.6"/><path d="M17.5 16 L20 17.5" stroke="#333" stroke-width="1.8"/></svg>
<svg style="position:absolute;left:398px;top:721px" width="14" height="14" viewBox="0 0 14 14"><mask id="mmn"><rect width="14" height="14" fill="#fff"/><circle cx="10.2" cy="5.3" r="5.3" fill="#000"/></mask><circle cx="7" cy="7" r="6" fill="#787e86" mask="url(#mmn)"/></svg>
<div style="position:absolute;left:415px;top:723.00px;font-size:12.22px;line-height:12.22px;color:#1e1410;font-weight:normal;letter-spacing:0px;white-space:nowrap;transform:scaleX(0.9609);transform-origin:0 0;">29 °C</div>
<div style="position:absolute;left:713px;top:716px;width:44px;height:23px;border:1px solid #f0f0f0;background:#b8cca8"></div>
<div style="position:absolute;left:713px;top:740px;width:46px;height:1px;background:#5a6a5a;"></div>
<svg style="position:absolute;left:728px;top:720px" width="16" height="16" viewBox="0 0 16 16"><path d="M8 8 L1.50 4.25 A7.5 7.5 0 0 1 14.50 4.25 Z" fill="#db4437"/><path d="M8 8 L14.50 4.25 A7.5 7.5 0 0 1 8.00 15.50 Z" fill="#f4c20d"/><path d="M8 8 L8.00 15.50 A7.5 7.5 0 0 1 1.50 4.25 Z" fill="#0f9d58"/><circle cx="8" cy="8" r="3.52" fill="#fff"/><circle cx="8" cy="8" r="2.77" fill="#4285f4"/></svg>
<div style="position:absolute;left:759px;top:716px;width:47px;height:26px;background:#a8190a;"></div>
<div style="position:absolute;left:806px;top:716px;width:1px;height:26px;background:#f2230d;"></div>
<div style="position:absolute;left:807px;top:716px;width:46px;height:26px;background:#a8190a;"></div>
<div style="position:absolute;left:853px;top:716px;width:1px;height:26px;background:#f2230d;"></div>
<div style="position:absolute;left:854px;top:716px;width:46px;height:26px;background:#a8190a;"></div>
<div style="position:absolute;left:900.5px;top:723.00px;font-size:12.22px;line-height:12.22px;color:#1e1410;font-weight:normal;letter-spacing:0px;white-space:nowrap;transform:scaleX(0.9788);transform-origin:0 0;">temp1 45 °C temp2 56 °C temp3 50 °C</div>
<svg style="position:absolute;left:1118px;top:716px" width="16" height="26" viewBox="0 0 16 26"><path d="M8.5 1.3 Q-4.5 13 8.5 25 M10.5 5.5 Q3.5 13 10.5 21 M13.3 9 Q9.7 13 13.3 17" stroke="#4a58a8" stroke-width="1.3" fill="none"/></svg>
<svg style="position:absolute;left:1134px;top:719px" width="16" height="19" viewBox="0 0 16 19"><circle cx="8" cy="8" r="6.8" fill="none" stroke="#a02a40" stroke-width="0.9" opacity="0.7"/><circle cx="8" cy="8" r="4.6" fill="none" stroke="#8a3a70" stroke-width="0.7" opacity="0.6"/><path d="M3 17 L6 10.5 L10 10.5 L13 17 M4.5 15 L11.5 15" stroke="#f0f0f0" stroke-width="1.7" fill="none"/><path d="M5.8 11 L10.2 11" stroke="#4a6ac8" stroke-width="1.6"/><circle cx="8" cy="7.2" r="2" fill="#e8e8e8" stroke="#555" stroke-width="0.6"/></svg>
<svg style="position:absolute;left:1153px;top:722px" width="12" height="14" viewBox="0 0 12 14"><path d="M4.2 1 L8 1 L8 5.5 L11.5 5.5 L6.1 13 L0.5 5.5 L4.2 5.5 Z" fill="#3a0808" stroke="#f87a6a" stroke-width="0.5"/></svg>
<div style="position:absolute;left:1168.5px;top:723.00px;font-size:12.22px;line-height:12.22px;color:#1e1410;font-weight:normal;letter-spacing:0px;white-space:nowrap;transform:scaleX(0.9713);transform-origin:0 0;">5,2 KiB/s</div>
<svg style="position:absolute;left:1219px;top:722px" width="12" height="14" viewBox="0 0 12 14"><path d="M4.2 13 L8 13 L8 8.5 L11.5 8.5 L6.1 1 L0.5 8.5 L4.2 8.5 Z" fill="#3a0808" stroke="#f87a6a" stroke-width="0.5"/></svg>
<div style="position:absolute;left:1234px;top:723.00px;font-size:12.22px;line-height:12.22px;color:#1e1410;font-weight:normal;letter-spacing:0px;white-space:nowrap;transform:scaleX(0.9713);transform-origin:0 0;">3,8 KiB/s</div>
<svg style="position:absolute;left:1289px;top:721px" width="13" height="14" viewBox="0 0 13 14"><path d="M3.6 3.8 A5 5 0 1 0 9.4 3.8" stroke="#2a0806" stroke-width="2" fill="none"/><path d="M6.5 0.8 L6.5 6.6" stroke="#2a0806" stroke-width="2"/></svg>
<svg style="position:absolute;left:1315px;top:721px" width="12" height="15" viewBox="0 0 12 15"><path d="M3.3 6.5 L3.3 1.5 L8.7 1.5 L8.7 6.5" stroke="#2a0806" stroke-width="1.4" fill="none"/><rect x="1.2" y="6.3" width="9.6" height="7.6" rx="0.8" fill="#6a0a04" stroke="#2a0806" stroke-width="0.9"/></svg>
<svg style="position:absolute;left:1348px;top:724px" width="7" height="11" viewBox="0 0 7 11"><path d="M0 0.5 L5.2 5.3 L0 10.2 Z" fill="#1a2a2a"/></svg>
<svg style="position:absolute;left:37px;top:745px" width="22" height="20" viewBox="0 0 22 20"><defs><linearGradient id="gmt" x1="0" y1="0" x2="0" y2="1"><stop offset="0" stop-color="#b4e488"/><stop offset="1" stop-color="#6ab838"/></linearGradient></defs><path d="M0.6 0.6 L17.5 0.6 Q20.8 0.6 20.8 4 L20.8 18.8 L7.5 18.8 Q2.6 18.8 2.6 14 L2.6 6.6 L0.6 6.6 Z" fill="url(#gmt)" stroke="#f4fff0" stroke-width="1.2"/><path d="M5.8 3.5 L5.8 13.2 Q5.8 15.8 8.4 15.8 L15.8 15.8 Q17.8 15.8 17.8 13.5 L17.8 9.5 Q17.8 6.3 14.8 6.3 Q11.8 6.3 11.8 9.3 L11.8 14.5 M8.8 14.5 L8.8 9.3 Q8.8 6.3 11.8 6.3" stroke="#f4ffe8" stroke-width="1.5" fill="none"/></svg>
<div style="position:absolute;left:64.5px;top:749.01px;font-size:12.71px;line-height:12.71px;color:#1e2010;font-weight:normal;letter-spacing:0px;white-space:nowrap;">Menu</div>
<svg style="position:absolute;left:107px;top:745px" width="20" height="21" viewBox="0 0 20 21"><rect x="0" y="1" width="20" height="20" rx="2" fill="#5a1800" opacity="0.5"/><defs><linearGradient id="gop" x1="0" y1="0" x2="0" y2="1"><stop offset="0" stop-color="#e03838"/><stop offset="1" stop-color="#a81010"/></linearGradient></defs><rect width="20" height="20" rx="2" fill="url(#gop)"/><ellipse cx="10" cy="10.3" rx="4.6" ry="6.6" fill="none" stroke="#fafafa" stroke-width="2.4"/></svg>
<svg style="position:absolute;left:135px;top:748px" width="16" height="14" viewBox="0 0 16 14"><rect x="0.5" y="0.5" width="15" height="13" rx="1" fill="#8aaa58" stroke="#4a4a3a" stroke-width="0.8"/><rect x="1" y="1" width="14" height="2.2" fill="#e8e8e8"/><rect x="3" y="9" width="10" height="4" fill="#283818"/></svg>
<svg style="position:absolute;left:169px;top:745px" width="20" height="20" viewBox="0 0 20 20"><defs><linearGradient id="gsk" x1="0" y1="0" x2="0" y2="1"><stop offset="0" stop-color="#9ae0ff"/><stop offset="1" stop-color="#48b0e8"/></linearGradient></defs><rect width="20" height="20" rx="2" fill="url(#gsk)"/><circle cx="10" cy="10" r="7.8" fill="#18a0e8"/><circle cx="5.5" cy="5.5" r="3" fill="#18a0e8"/><circle cx="14.5" cy="14.5" r="3" fill="#18a0e8"/><path d="M13.2 6.8 Q12 5.3 9.8 5.3 Q6.5 5.3 6.6 7.8 Q6.8 9.5 10 10.2 Q13.5 11 13.4 12.6 Q13.2 14.8 10 14.8 Q7.6 14.8 6.6 13" stroke="#fff" stroke-width="2.1" fill="none"/></svg>
<svg style="position:absolute;left:195px;top:745px" width="20" height="20" viewBox="0 0 20 20"><rect width="20" height="20" rx="2" fill="#4a4878"/><circle cx="10" cy="10" r="8" fill="#2a68b8"/><path d="M3 11 Q8 3 17 5.5 Q11 6 6 12 Z" fill="#f0f4ff"/><path d="M5 15 Q12 12 17.5 9 Q15 15 8 16 Z" fill="#90b8e8"/><circle cx="10" cy="10" r="8" fill="none" stroke="#1a3a78" stroke-width="0.8"/></svg>
<div style="position:absolute;left:229px;top:743px;width:170px;height:22px;border:1px solid #8a7a5a;border-radius:3px;background:#cc9000"></div>
<svg style="position:absolute;left:237px;top:747px" width="16" height="16" viewBox="0 0 16 16"><path d="M8 8 L1.50 4.25 A7.5 7.5 0 0 1 14.50 4.25 Z" fill="#db4437"/><path d="M8 8 L14.50 4.25 A7.5 7.5 0 0 1 8.00 15.50 Z" fill="#f4c20d"/><path d="M8 8 L8.00 15.50 A7.5 7.5 0 0 1 1.50 4.25 Z" fill="#0f9d58"/><circle cx="8" cy="8" r="3.52" fill="#fff"/><circle cx="8" cy="8" r="2.77" fill="#4285f4"/></svg>
<div style="position:absolute;left:261px;top:749.01px;font-size:12.62px;line-height:12.62px;color:#222;font-weight:normal;letter-spacing:0px;white-space:nowrap;">www.tlyuklememerke...</div>
<svg style="position:absolute;left:964px;top:744px" width="21" height="22" viewBox="0 0 21 22"><rect x="1" y="2" width="18" height="19" rx="1" fill="#f4f4f4" stroke="#aaa" stroke-width="0.8"/><g stroke="#5a7ac8" stroke-width="0.8"><path d="M3 7 L10 7 M3 10 L9 10 M3 13 L8 13 M3 16 L11 16"/></g><path d="M15 0 L18 2 L11 17 L8 17.5 L8.5 15 Z" fill="#e88a18"/><path d="M2 1 L18 1" stroke="#888" stroke-dasharray="1 1"/></svg>
<svg style="position:absolute;left:999px;top:745px" width="22" height="20" viewBox="0 0 22 20"><rect x="0.5" y="0.5" width="21" height="15" rx="1" fill="#ddd" stroke="#888"/><rect x="2.5" y="2.5" width="17" height="11" fill="#3a3a3a"/><path d="M2.5 2.5 L11 13.5 L2.5 13.5 Z" fill="#d8b830"/><rect x="8" y="16" width="6" height="2" fill="#bbb"/><rect x="4" y="18" width="14" height="2" fill="#ddd"/></svg>
<svg style="position:absolute;left:1027px;top:745px" width="21" height="21" viewBox="0 0 21 21"><path d="M10 0.5 L19 3.5 Q19 15 10 20 Q1 15 1 3.5 Z" fill="#e8e8e8" stroke="#999"/><path d="M4.5 10 L8.5 14 L15.5 5" stroke="#5aa82a" stroke-width="2.4" fill="none"/></svg>
<svg style="position:absolute;left:1056px;top:747px" width="16" height="15" viewBox="0 0 16 15"><rect x="1.2" y="10" width="2.5" height="4.5" rx="0.8" fill="#3a2800"/><rect x="5.3" y="7" width="2.5" height="7.5" rx="0.8" fill="#3a2800"/><rect x="9.4" y="4" width="2.5" height="10.5" rx="0.8" fill="#3a2800"/><rect x="13.5" y="1" width="2" height="13.5" fill="#c89400"/></svg>
<svg style="position:absolute;left:1081px;top:747px" width="19" height="15" viewBox="0 0 19 15"><path d="M0 5 L3 5 L7 1 L7 14 L3 10 L0 10 Z" fill="#2a2000"/><path d="M9.5 4.5 Q11.5 7.5 9.5 10.5 M12 2.5 Q15 7.5 12 12.5" stroke="#2a2000" stroke-width="1.5" fill="none"/><path d="M14.5 0.5 Q19 7.5 14.5 14.5" stroke="#b88a10" stroke-width="1.4" fill="none"/></svg>
<svg style="position:absolute;left:1108px;top:748px" width="19" height="13" viewBox="0 0 19 13"><rect x="1" y="1" width="15" height="11" rx="1.5" fill="#d8a000" stroke="#2a2000" stroke-width="2"/><rect x="16.5" y="4" width="2" height="5" fill="#2a2000"/><path d="M3.5 8 L8 5 L9 7 L13 4.5" stroke="#2a2000" stroke-width="1.3" fill="none"/></svg>
<svg style="position:absolute;left:1134px;top:745px" width="20" height="20" viewBox="0 0 20 20"><defs><linearGradient id="gd1134" x1="0" y1="0" x2="0" y2="1"><stop offset="0" stop-color="#f0f0f0"/><stop offset="1" stop-color="#c4c4c4"/></linearGradient></defs><rect x="0.5" y="0.5" width="19" height="19" rx="2" fill="url(#gd1134)" stroke="#b0b0b0" stroke-width="0.6"/><ellipse cx="10" cy="8.8" rx="6.5" ry="6" fill="none" stroke="#d0d0d0" stroke-width="1"/><path d="M6.5 9.5 Q10 12 13.5 9.5" stroke="#c8c8c8" fill="none"/><rect x="0.5" y="15" width="19" height="4.5" fill="#8a8a8a"/><rect x="1" y="15" width="18" height="1" fill="#d8d8d8"/><rect x="2" y="17" width="4" height="1" fill="#333"/></svg>
<svg style="position:absolute;left:1160px;top:745px" width="20" height="20" viewBox="0 0 20 20"><defs><linearGradient id="gd1160" x1="0" y1="0" x2="0" y2="1"><stop offset="0" stop-color="#f0f0f0"/><stop offset="1" stop-color="#c4c4c4"/></linearGradient></defs><rect x="0.5" y="0.5" width="19" height="19" rx="2" fill="url(#gd1160)" stroke="#b0b0b0" stroke-width="0.6"/><ellipse cx="10" cy="8.8" rx="6.5" ry="6" fill="none" stroke="#d0d0d0" stroke-width="1"/><path d="M6.5 9.5 Q10 12 13.5 9.5" stroke="#c8c8c8" fill="none"/><rect x="0.5" y="15" width="19" height="4.5" fill="#8a8a8a"/><rect x="1" y="15" width="18" height="1" fill="#d8d8d8"/><rect x="2" y="17" width="4" height="1" fill="#333"/></svg>
<div style="position:absolute;left:1218.5px;top:749.02px;font-size:12.07px;line-height:12.07px;color:#1e2010;font-weight:normal;letter-spacing:0px;white-space:nowrap;">Çrş Ağu &nbsp;2, 23:15:13</div>
<svg style="position:absolute;left:1348px;top:751px" width="6" height="10" viewBox="0 0 6 10"><path d="M0 0 L6 5 L0 10 Z" fill="#1e2a2a"/></svg></body></html>
